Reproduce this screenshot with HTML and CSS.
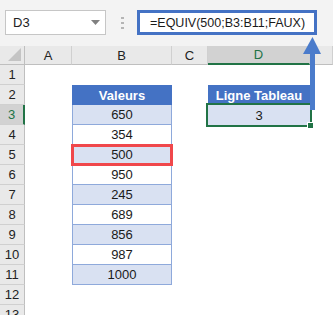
FILE: index.html
```html
<!DOCTYPE html>
<html>
<head>
<meta charset="utf-8">
<link rel="stylesheet" href="styles.css">
</head>
<body>
<div class="app">
  <div class="fbar">
    <div class="namebox"><span>D3</span><svg class="dd" width="9" height="5" viewBox="0 0 9 5"><polygon points="0,0 9,0 4.5,5" fill="#808080"/></svg></div>
    <svg class="dots" width="3" height="12" viewBox="0 0 3 12"><rect x="0" y="0" width="3" height="2" fill="#b5b5b5"/><rect x="0" y="5" width="3" height="2" fill="#b5b5b5"/><rect x="0" y="10" width="3" height="2" fill="#b5b5b5"/></svg>
    <div class="formula">=EQUIV(500;B3:B11;FAUX)</div>
  </div>
  <div class="sheet">
    <div class="corner"><svg width="13" height="13" viewBox="0 0 13 13"><polygon points="13,0 13,13 0,13" fill="#c4c4c4"/></svg></div>
    <div class="ch">A</div><div class="ch">B</div><div class="ch">C</div><div class="ch sel">D</div><div class="ch"></div>

    <div class="rh">1</div><div class="c"></div><div class="c"></div><div class="c"></div><div class="c"></div><div class="c"></div>
    <div class="rh">2</div><div class="c"></div><div class="c th">Valeurs</div><div class="c"></div><div class="c th">Ligne Tableau</div><div class="c"></div>
    <div class="rh rsel">3</div><div class="c"></div><div class="c t band">650</div><div class="c"></div><div class="c res">3<span class="handle"></span></div><div class="c"></div>
    <div class="rh">4</div><div class="c"></div><div class="c t">354</div><div class="c"></div><div class="c"></div><div class="c"></div>
    <div class="rh">5</div><div class="c"></div><div class="c t band hit">500</div><div class="c"></div><div class="c"></div><div class="c"></div>
    <div class="rh">6</div><div class="c"></div><div class="c t">950</div><div class="c"></div><div class="c"></div><div class="c"></div>
    <div class="rh">7</div><div class="c"></div><div class="c t band">245</div><div class="c"></div><div class="c"></div><div class="c"></div>
    <div class="rh">8</div><div class="c"></div><div class="c t">689</div><div class="c"></div><div class="c"></div><div class="c"></div>
    <div class="rh">9</div><div class="c"></div><div class="c t band">856</div><div class="c"></div><div class="c"></div><div class="c"></div>
    <div class="rh">10</div><div class="c"></div><div class="c t">987</div><div class="c"></div><div class="c"></div><div class="c"></div>
    <div class="rh">11</div><div class="c"></div><div class="c t band">1000</div><div class="c"></div><div class="c"></div><div class="c"></div>
    <div class="rh">12</div><div class="c"></div><div class="c"></div><div class="c"></div><div class="c"></div><div class="c"></div>
    <div class="rh">13</div><div class="c"></div><div class="c"></div><div class="c"></div><div class="c"></div><div class="c"></div>
  </div>
  <svg class="arrow" width="20" height="76" viewBox="0 0 20 76">
    <rect x="8" y="16" width="5" height="58" fill="#4a7bcb"/>
    <polygon points="1,18 10.5,1 19,18" fill="#4a7bcb"/>
  </svg>
</div>
</body>
</html>
```

FILE: styles.css
```css
html, body {
  margin: 0;
  padding: 0;
  background: #ffffff;
}
body {
  width: 333px;
  height: 315px;
  overflow: hidden;
  font-family: "Liberation Sans", Arial, sans-serif;
  font-size: 13px;
  color: #1a1a1a;
}
.app {
  position: relative;
  width: 333px;
  height: 315px;
  overflow: hidden;
}
.fbar {
  height: 46px;
  box-sizing: border-box;
  background: #f3f3f3;
  display: flex;
  align-items: flex-start;
  padding: 10px 0 0 5px;
}
.namebox {
  width: 101px;
  height: 25px;
  box-sizing: border-box;
  background: #fff;
  border: 1px solid #c6c6c6;
  display: flex;
  align-items: center;
  justify-content: space-between;
  padding: 0 5px 0 7px;
  font-size: 13px;
  color: #222;
}
.dots {
  margin: 7px 0 0 15px;
}
.formula {
  margin-left: 13px;
  width: 180px;
  height: 25px;
  box-sizing: border-box;
  border: 3px solid #4472c4;
  background: #fff;
  padding-left: 10px;
  display: flex;
  align-items: center;
  font-size: 12.5px;
  color: #1a1a1a;
  white-space: nowrap;
}
.sheet {
  display: grid;
  grid-template-columns: 25px 47px 100px 36px 102px 23px;
  grid-template-rows: 19px;
  grid-auto-rows: 20px;
}
.corner {
  background: #e9e9e9;
  border-right: 1px solid #bfbfbf;
  border-bottom: 1px solid #bfbfbf;
  box-sizing: border-box;
  display: flex;
  align-items: flex-end;
  justify-content: flex-end;
  padding: 0 3px 3px 0;
}
.ch {
  background: #e9e9e9;
  border-right: 1px solid #d0d0d0;
  border-bottom: 1px solid #bfbfbf;
  box-sizing: border-box;
  display: flex;
  align-items: center;
  justify-content: center;
  font-size: 13px;
  color: #222;
}
.ch.sel {
  background: #d2d2d2;
  color: #217346;
  border-bottom: 2px solid #217346;
}
.rh {
  background: #e9e9e9;
  border-right: 1px solid #bfbfbf;
  border-bottom: 1px solid #d0d0d0;
  box-sizing: border-box;
  display: flex;
  align-items: center;
  justify-content: center;
  font-size: 13px;
  color: #222;
}
.rh.rsel {
  background: #d2d2d2;
  color: #217346;
  border-right: 2px solid #217346;
}
.c {
  box-sizing: border-box;
  display: flex;
  align-items: center;
  justify-content: center;
  font-size: 13px;
  position: relative;
}
.th {
  background: #4472c4;
  color: #fff;
  font-weight: bold;
  font-size: 13px;
}
.t {
  border-left: 1px solid #8ea9db;
  border-right: 1px solid #8ea9db;
  border-bottom: 1px solid #8ea9db;
}
.band {
  background: #d9e1f2;
}
.hit {
  outline: 3px solid #f0474b;
  outline-offset: -2px;
  z-index: 2;
}
.res {
  background: #d9e1f2;
  outline: 2px solid #217346;
  z-index: 2;
}
.handle {
  position: absolute;
  right: -4px;
  bottom: -4px;
  width: 5px;
  height: 5px;
  background: #217346;
  border: 1px solid #fff;
}
.arrow {
  position: absolute;
  left: 302px;
  top: 36px;
  z-index: 5;
}
```
